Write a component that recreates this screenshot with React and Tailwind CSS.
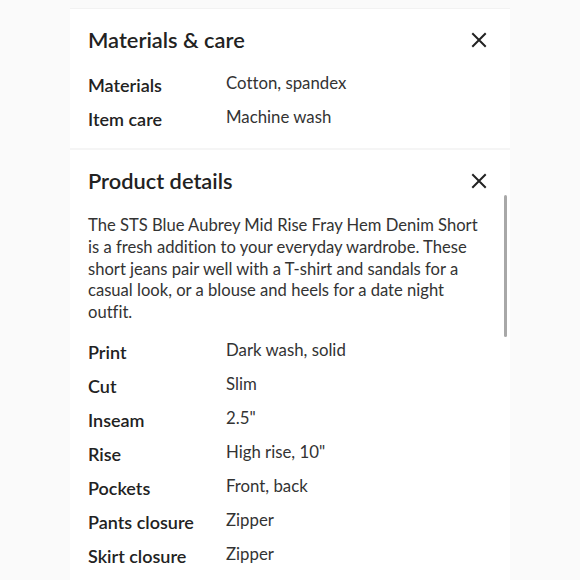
import React from "react";

const XIcon = () => (
  <svg width="16" height="16" viewBox="0 0 16 16" fill="none" stroke="#222" strokeWidth="2" strokeLinecap="square">
    <path d="M2 2 L14 14 M14 2 L2 14" />
  </svg>
);

const Row = ({ label, value }) => (
  <div className="flex h-[34px] items-center">
    <div className="w-[138px] text-[18px] font-semibold text-[#222] leading-none pt-[2px]">{label}</div>
    <div className="text-[16.8px] text-[#333] leading-none pb-[2px]">{value}</div>
  </div>
);

export default function App() {
  const details = [
    ["Print", "Dark wash, solid"],
    ["Cut", "Slim"],
    ["Inseam", "2.5\""],
    ["Rise", "High rise, 10\""],
    ["Pockets", "Front, back"],
    ["Pants closure", "Zipper"],
    ["Skirt closure", "Zipper"],
  ];
  return (
    <div className="w-[580px] h-[580px] bg-[#fafafa] overflow-hidden [font-variant-ligatures:none]" style={{ fontFamily: "Lato, 'Noto Sans', sans-serif" }}>
      <div className="ml-[70px] w-[440px] mt-[8px] border-t border-[#f2f2f2] bg-white h-[600px]">
        <section className="pl-[18px] pr-[23px] pt-[17px] pb-[13px] border-b-2 border-[#f5f5f5]">
          <div className="flex h-[28px] items-center justify-between">
            <h2 className="text-[21.8px] font-semibold text-[#222]">Materials &amp; care</h2>
            <XIcon />
          </div>
          <div className="mt-[13px]">
            <Row label="Materials" value="Cotton, spandex" />
            <Row label="Item care" value="Machine wash" />
          </div>
        </section>
        <section className="relative pl-[18px] pr-[23px] pt-[17px]">
          <div className="flex h-[28px] items-center justify-between">
            <h2 className="text-[21.8px] font-semibold text-[#222]">Product details</h2>
            <XIcon />
          </div>
          <p className="mt-[20px] text-[16.6px] leading-[21.8px] text-[#333] whitespace-nowrap">
            The STS Blue Aubrey Mid Rise Fray Hem Denim Short
            <br />
            is a fresh addition to your everyday wardrobe. These
            <br />
            short jeans pair well with a T-shirt and sandals for a
            <br />
            casual look, or a blouse and heels for a date night
            <br />
            outfit.
          </p>
          <div className="mt-[10px]">
            {details.map(([l, v]) => (
              <Row key={l} label={l} value={v} />
            ))}
          </div>
          <div className="absolute left-[434px] top-[45px] w-[3px] h-[142px] rounded-full bg-[#a8a8a8]" />
        </section>
      </div>
    </div>
  );
}
